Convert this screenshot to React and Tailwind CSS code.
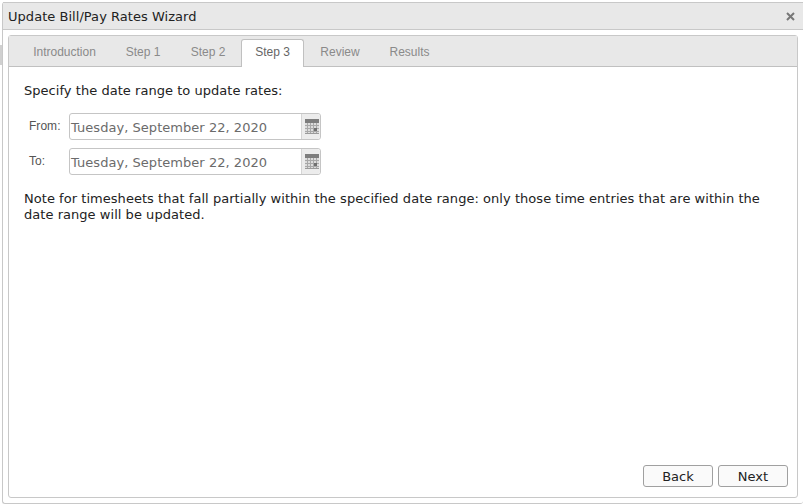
const sans = "font-['DejaVu_Sans',sans-serif] tracking-[0.04px]";

function Calendar() {
  return (
    <svg width="14" height="15" viewBox="0 0 14 15" className="block">
      <rect x="0" y="0" width="14" height="15" fill="#dcdcdc" />
      <rect x="0" y="0" width="14" height="4" fill="#7d7d7d" />
      <path d="M0 6.5H14M0 9.5H14M0 12.5H14M2.5 4V15M5.5 4V15M8.5 4V15M11.5 4V15" stroke="#a8a8a8" strokeWidth="1" />
      <rect x="9" y="9" width="3" height="3" fill="#707070" />
      <rect x="0" y="14" width="14" height="1" fill="#9a9a9a" />
    </svg>
  );
}

function DateField({ label, mt }) {
  return (
    <div className={`flex items-center ${mt}`}>
      <div className="w-[45px] pl-[5px] pb-[2px] font-['Liberation_Sans',sans-serif] text-[12px] text-[#555]">{label}</div>
      <div className="flex h-[27px] w-[252px] rounded-[3px] border border-[#c5c5c5] bg-white">
        <div className={`flex-1 pl-[1px] pt-[5px] text-[13px] leading-[18px] text-[#6b6b6b] ${sans}`}>Tuesday, September 22, 2020</div>
        <div className="flex w-[19px] items-center justify-center rounded-r-[3px] border-l border-[#d5d5d5] bg-[#ececec] pl-[1px]">
          <Calendar />
        </div>
      </div>
    </div>
  );
}

function Btn({ children }) {
  return (
    <div className={`flex h-[22px] w-[70px] items-center justify-center rounded-[3px] border border-[#a0a0a0] bg-[#fafafa] pt-[1px] text-[13px] text-[#222] ${sans}`}>{children}</div>
  );
}

export default function App() {
  const tabs = [
    ["Introduction", "ml-[9px] w-[93px]"],
    ["Step 1", "w-[64px]"],
    ["Step 2", "w-[66px]"],
  ];
  return (
    <div className="relative h-[504px] w-[803px] overflow-hidden bg-white pl-[2px] pt-[2px]">
      <div className="absolute left-0 top-[45px] h-[20px] w-[2px] bg-[#d0d0d0]" />
      <div className="flex h-[502px] w-[801px] flex-col rounded-[3px] border-b border-l border-[#c8c8c8] bg-white">
        <div className={`flex h-[28px] shrink-0 items-center justify-between border-y border-[#c8c8c8] bg-[#e8e8e8] pl-[5px] pr-[8px] text-[13px] text-[#222] ${sans}`}>
          <span className="relative top-[1px]">Update Bill/Pay Rates Wizard</span>
          <svg width="9" height="9" viewBox="0 0 9 9"><path d="M1 1L8 8M8 1L1 8" stroke="#777" strokeWidth="2" /></svg>
        </div>
        <div className="mx-[5px] mb-[5px] mt-[5px] flex flex-1 flex-col rounded-[3px] border border-[#c8c8c8]">
          <div className="flex h-[31px] shrink-0 items-end border-b border-[#c0c0c0] bg-[#e8e8e8] font-['Liberation_Sans',sans-serif] text-[12px] text-[#8a8a8a]">
            {tabs.map(([t, c]) => (
              <div key={t} className={`flex h-[28px] items-center justify-center pb-[1px] ${c}`}>{t}</div>
            ))}
            <div className="relative top-[1px] flex h-[28px] w-[63px] items-center justify-center rounded-t-[3px] border border-b-0 border-[#c0c0c0] bg-white pb-[3px] text-[#666]">Step 3</div>
            <div className="flex h-[28px] w-[72px] items-center justify-center pb-[1px]">Review</div>
            <div className="flex h-[28px] w-[67px] items-center justify-center pb-[1px]">Results</div>
          </div>
          <div className={`flex flex-1 flex-col pl-[15px] pr-[9px] text-[13px] text-[#222] ${sans}`}>
            <div className="mt-[15px] leading-[18px]">Specify the date range to update rates:</div>
            <div className="mt-[13px]">
              <DateField label="From:" />
              <DateField label="To:" mt="mt-[8px]" />
            </div>
            <div className="mt-[16px] max-w-[745px] leading-[16px]">
              Note for timesheets that fall partially within the specified date range: only those time entries that are within the date range will be updated.
            </div>
            <div className="mb-[10px] mt-auto flex justify-end gap-[5px]">
              <Btn>Back</Btn>
              <Btn>Next</Btn>
            </div>
          </div>
        </div>
      </div>
    </div>
  );
}
